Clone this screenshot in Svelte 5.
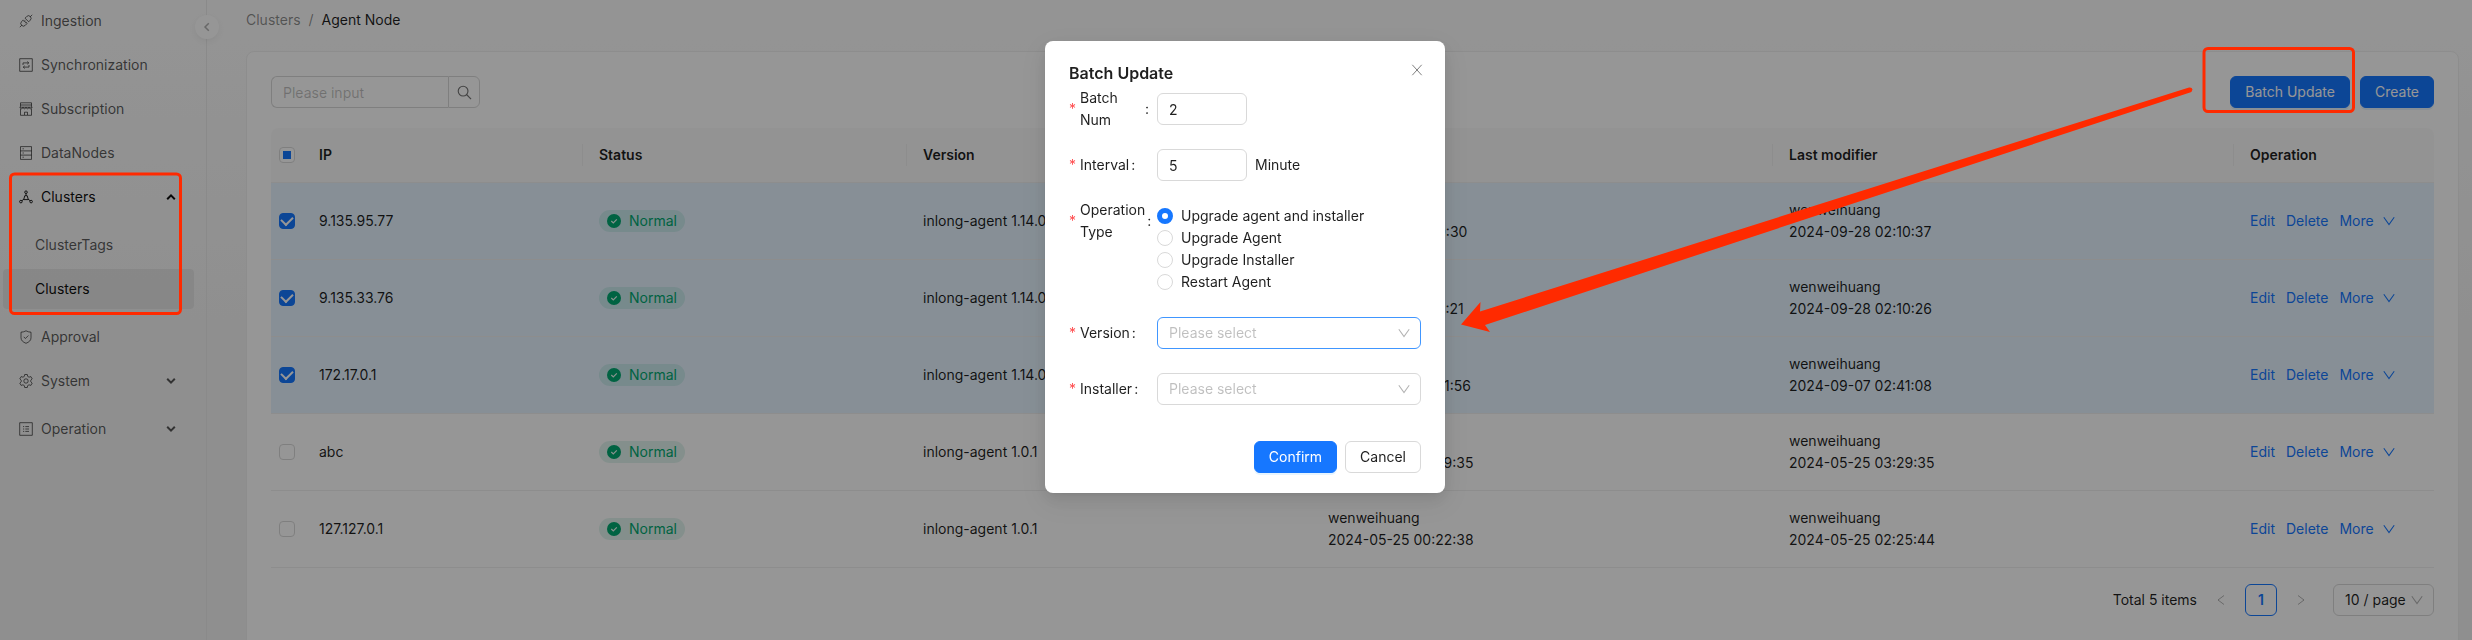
<script>
  const rows = [
    { ip: '9.135.95.77', version: 'inlong-agent 1.14.0', created: '2024-09-27 11:20:30', modified: '2024-09-28 02:10:37', checked: true },
    { ip: '9.135.33.76', version: 'inlong-agent 1.14.0', created: '2024-09-27 11:22:21', modified: '2024-09-28 02:10:26', checked: true },
    { ip: '172.17.0.1', version: 'inlong-agent 1.14.0', created: '2024-05-28 09:01:56', modified: '2024-09-07 02:41:08', checked: true },
    { ip: 'abc', version: 'inlong-agent 1.0.1', created: '2024-05-25 03:29:35', modified: '2024-05-25 03:29:35', checked: false },
    { ip: '127.127.0.1', version: 'inlong-agent 1.0.1', created: '2024-05-25 00:22:38', modified: '2024-05-25 02:25:44', checked: false }
  ];
  const operations = ['Upgrade agent and installer', 'Upgrade Agent', 'Upgrade Installer', 'Restart Agent'];
  let operation = $state(operations[0]);
  const menu = [
    { label: 'Ingestion', icon: 'plug' },
    { label: 'Synchronization', icon: 'sync' },
    { label: 'Subscription', icon: 'shop' },
    { label: 'DataNodes', icon: 'rack' },
    { label: 'Clusters', icon: 'nodes', open: true, children: ['ClusterTags', 'Clusters'] },
    { label: 'Approval', icon: 'shield' },
    { label: 'System', icon: 'gear', group: true },
    { label: 'Operation', icon: 'list', group: true }
  ];
</script>

{#snippet icon(name)}
  <svg class="icon" viewBox="0 0 14 14" aria-hidden="true">
    {#if name === 'plug'}
      <path d="M.8 13.2l2-2M13.2.8l-2 2M6 4.200l1.700-1.700a2.500 2.500 0 0 1 3.600 3.600L9.700 7.800zM4.300 5.900L2.600 7.600a2.500 2.500 0 0 0 3.700 3.700l1.700-1.700zM6 6.600L5 7.700M7.500 8.100l-1 1.100" />
    {:else if name === 'sync'}
      <path d="M.7.7h12.600v12.600H.7zM4 7V4.900h5.400M8.300 3.500l1.500 1.400-1.500 1.300M10 7v2.100H4.600M5.700 7.800L4.200 9.100l1.500 1.400" />
    {:else if name === 'shop'}
      <path d="M1.500.8h11M1.500 3h11M1.500.8v4M12.500.8v4M.7 5.200h12.600M1.500 6.800v6.500h11V6.800M1 5.300c.5 2 2.500 2 3 0 .5 2 2.500 2 3 0 .5 2 2.500 2 3 0 .5 2 2.500 2 3 0M5.500 13v-2.800h3V13" />
    {:else if name === 'rack'}
      <path d="M1.500.6h11v12.800h-11zM1.500 4.900h11M1.500 9.100h11M3.500 2.800h1.400M3.500 7h1.400M3.500 11.200h1.400" />
    {:else if name === 'nodes'}
      <path d="M7 3.600v1.800M4.800 9.200l-2 1.600M9.200 9.200l2 1.600M4.700 9.600L5.800 5.700h2.400l1.100 3.900z" />
      <circle cx="7" cy="2.200" r="1.300" /><circle cx="1.900" cy="11.600" r="1.300" /><circle cx="12.100" cy="11.600" r="1.300" />
    {:else if name === 'shield'}
      <path d="M7 .8c1.500.9 3.200 1.300 5 1.400v5.600c0 2.700-2 4.300-5 5.500-3-1.200-5-2.800-5-5.500V2.200c1.800-.1 3.500-.5 5-1.400zM4.700 6.800l1.700 1.700 3-3" />
    {:else if name === 'gear'}
      <path d="M5.700.5h2.600l.4 1.900 1.300.8 1.900-.6 1.300 2.300-1.400 1.300v1.600l1.400 1.300-1.300 2.300-1.900-.6-1.300.8-.4 1.900H5.700l-.4-1.900-1.300-.8-1.900.6L.8 9.100l1.400-1.300V6.200L.8 4.900l1.300-2.300 1.900.6 1.300-.8z" />
      <circle cx="7" cy="7" r="2.200" />
    {:else if name === 'list'}
      <path d="M.7.7h12.600v12.600H.7zM4 4.600h1.200M4 7h1.200M4 9.400h1.200M6.300 4.600H10M6.300 7H10M6.300 9.400H10" />
    {/if}
  </svg>
{/snippet}

{#snippet chevron()}
  <svg class="chev" viewBox="0 0 12 12" aria-hidden="true"><path d="M.8 2.300L6 9.500l5.200-7.200" /></svg>
{/snippet}

<div class="page">
  <nav class="sider" aria-label="Main">
    <ul class="menu">
      {#each menu as item}
        <li class:group={item.group || item.children}>
          <a class="entry" class:active={item.open} href="#{item.label}">
            {@render icon(item.icon)}
            <span>{item.label}</span>
            {#if item.group || item.children}
              <svg class="arrow" viewBox="0 0 10 10" aria-hidden="true"><path d={item.open ? 'M1.200 7.200L5 3.400l3.800 3.800' : 'M1.200 2.800L5 6.600l3.800-3.800'} /></svg>
            {/if}
          </a>
          {#if item.children}
            <ul class="submenu">
              {#each item.children as child}
                <li><a class="entry child" class:selected={child === 'Clusters'} href="#{child}">{child}</a></li>
              {/each}
            </ul>
          {/if}
        </li>
      {/each}
    </ul>
    <button class="collapse" aria-label="Collapse menu">
      <svg viewBox="0 0 12 12"><path d="M7.800 2.200L4 6l3.800 3.800" /></svg>
    </button>
  </nav>

  <main>
    <nav class="crumbs" aria-label="Breadcrumb">
      <a href="#clusters">Clusters</a><span>/</span><strong>Agent Node</strong>
    </nav>
    <section class="card">
      <div class="toolbar">
        <div class="search">
          <input type="text" placeholder="Please input" aria-label="Search" />
          <button aria-label="Search">
            <svg viewBox="0 0 16 16"><circle cx="6.500" cy="6.500" r="5.200" /><path d="M10.400 10.400l4.600 4.600" /></svg>
          </button>
        </div>
        <div class="actions">
          <button class="btn primary">Batch Update</button>
          <button class="btn primary">Create</button>
        </div>
      </div>

      <table>
        <colgroup>
          <col class="c-check" /><col class="c-ip" /><col class="c-status" /><col class="c-version" />
          <col class="c-user" /><col class="c-user" /><col class="c-op" />
        </colgroup>
        <thead>
          <tr>
            <th class="pick"><input type="checkbox" aria-label="Select all" indeterminate={true} /></th>
            <th class="first">IP</th><th>Status</th><th>Version</th><th>Creator</th><th>Last modifier</th><th>Operation</th>
          </tr>
        </thead>
        <tbody>
          {#each rows as row}
            <tr class:chosen={row.checked}>
              <td class="pick"><input type="checkbox" aria-label="Select {row.ip}" checked={row.checked} /></td>
              <td>{row.ip}</td>
              <td>
                <span class="tag">
                  <svg viewBox="0 0 14 14" aria-hidden="true"><circle cx="7" cy="7" r="7" /><path d="M4.300 7l2 2 3.500-3.700" /></svg>
                  Normal
                </span>
              </td>
              <td>{row.version}</td>
              <td>wenweihuang<br />{row.created}</td>
              <td>wenweihuang<br />{row.modified}</td>
              <td>
                <div class="ops">
                  <a href="#edit">Edit</a><a href="#delete">Delete</a><a class="more" href="#more">More {@render chevron()}</a>
                </div>
              </td>
            </tr>
          {/each}
        </tbody>
      </table>

      <div class="pager">
        <span>Total 5 items</span>
        <button class="turn" aria-label="Previous page"><svg viewBox="0 0 12 12"><path d="M9 1.500L3 6l6 4.500" /></svg></button>
        <button class="current">1</button>
        <button class="turn" aria-label="Next page"><svg viewBox="0 0 12 12"><path d="M3 1.500L9 6l-6 4.500" /></svg></button>
        <div class="select size">
          <select aria-label="Page size"><option>10 / page</option></select>
          {@render chevron()}
        </div>
      </div>
    </section>
  </main>
</div>

<div class="mask">
  <div class="modal" role="dialog" aria-modal="true" aria-labelledby="dialog-title">
    <h2 id="dialog-title">Batch Update</h2>
    <button class="close" aria-label="Close"><svg viewBox="0 0 12 12"><path d="M1.300.8l9.400 10.400M10.700.8L1.300 11.200" /></svg></button>
    <form>
      <div class="field">
        <label for="num"><i>*</i><span>Batch Num</span><b>:</b></label>
        <input id="num" class="short" type="text" value="2" />
      </div>
      <div class="field">
        <label for="interval"><i>*</i><span>Interval</span><b>:</b></label>
        <input id="interval" class="short" type="text" value="5" />
        <span class="unit">Minute</span>
      </div>
      <div class="field">
        <span class="label" id="op-label"><i>*</i><span>Operation Type</span><b>:</b></span>
        <div class="radios" role="radiogroup" aria-labelledby="op-label">
          {#each operations as name}
            <label><input type="radio" name="operation" value={name} bind:group={operation} />{name}</label>
          {/each}
        </div>
      </div>
      <div class="field">
        <label for="version"><i>*</i><span>Version</span><b>:</b></label>
        <div class="select focus"><select id="version"><option>Please select</option></select>{@render chevron()}</div>
      </div>
      <div class="field">
        <label for="installer"><i>*</i><span>Installer</span><b>:</b></label>
        <div class="select"><select id="installer"><option>Please select</option></select>{@render chevron()}</div>
      </div>
      <div class="footer">
        <button type="button" class="btn primary">Confirm</button>
        <button type="button" class="btn">Cancel</button>
      </div>
    </form>
  </div>
</div>

<svg class="marks" width="2472" height="640" viewBox="0 0 2472 640" aria-hidden="true">
  <rect x="10.500" y="174" width="170" height="139.500" rx="4" />
  <rect x="2204" y="48.500" width="149.500" height="63" rx="4" />
  <path d="M1461 324.500L1480.500 302 1480 311.500 2189 87.500Q2192 87 2192.500 89.500 2192 92 2190 92.500L1485 325 1490 332z" />
</svg>

<style>
  :global(body) {
    margin: 0;
    overflow: hidden;
    font-family: Inter, 'Liberation Sans', sans-serif;
    font-size: 14px;
    line-height: 22px;
    color: rgba(0, 0, 0, 0.88);
  }
  * { box-sizing: border-box; }
  button, input, select { font: inherit; color: inherit; margin: 0; }
  button { cursor: pointer; padding: 0; }
  a { text-decoration: none; color: inherit; }
  ul { list-style: none; margin: 0; padding: 0; }
  svg { flex: none; fill: none; stroke: currentColor; }

  .page {
    display: flex;
    height: 100vh;
    overflow: hidden;
    background: linear-gradient(#fcfcfc, #f4f4f4 50%);
  }

  .sider {
    position: relative;
    flex: 0 0 207px;
    border-right: 1px solid #ebebeb;
    padding: 1px 12px 0 3px;
    color: rgba(0, 0, 0, 0.65);
  }
  .menu, .submenu { display: flex; flex-direction: column; gap: 4px; }
  .submenu { padding-top: 8px; }
  .group { padding-bottom: 4px; }
  .entry {
    display: flex;
    align-items: center;
    gap: 8px;
    height: 40px;
    padding: 0 18px 0 16px;
    border-radius: 4px;
  }
  .child { padding-left: 32px; }
  .active, .selected { color: rgba(0, 0, 0, 0.95); }
  .selected { background: rgba(0, 0, 0, 0.06); }
  .icon { width: 14px; height: 14px; stroke-width: 0.900; }
  .arrow { width: 10px; height: 10px; margin-left: auto; stroke-width: 2; }
  .collapse {
    position: absolute;
    top: 15px;
    right: -13px;
    width: 24px;
    height: 24px;
    display: grid;
    place-items: center;
    border: 0;
    border-radius: 50%;
    background: #fff;
    color: rgba(0, 0, 0, 0.3);
    box-shadow: 0 2px 8px -2px rgba(0, 0, 0, 0.1);
  }
  .collapse svg { width: 12px; stroke-width: 1.500; }

  main { flex: 1; min-width: 0; padding: 9px 13px 0 39px; }
  .crumbs { display: flex; gap: 8px; margin-bottom: 20px; color: rgba(0, 0, 0, 0.45); }
  .crumbs strong { font-weight: 400; color: rgba(0, 0, 0, 0.88); }
  .card {
    padding: 24px 24px 40px;
    border: 1px solid #f0f0f0;
    border-radius: 8px;
    background: #fff;
  }
  .toolbar { display: flex; justify-content: space-between; margin-bottom: 20px; }
  .search { display: flex; width: 209px; }
  .search input {
    flex: 1;
    min-width: 0;
    height: 32px;
    padding: 0 11px;
    border: 1px solid #d9d9d9;
    border-right: 0;
    border-radius: 6px 0 0 6px;
    background: #fff;
  }
  ::placeholder { color: rgba(0, 0, 0, 0.25); opacity: 1; }
  .search button {
    width: 32px;
    height: 32px;
    display: grid;
    place-items: center;
    border: 1px solid #d9d9d9;
    border-radius: 0 6px 6px 0;
    background: #fff;
    color: rgba(0, 0, 0, 0.55);
  }
  .search svg { width: 15px; stroke-width: 1.200; }
  .actions { display: flex; gap: 10px; }
  .btn {
    height: 32px;
    padding: 0 14px;
    border: 1px solid #d9d9d9;
    border-radius: 6px;
    background: #fff;
  }
  .primary {
    border-color: #1677ff;
    background: #1677ff;
    color: #fff;
    box-shadow: 0 2px 0 rgba(5, 145, 255, 0.1);
  }

  table { width: 100%; table-layout: fixed; border-collapse: separate; border-spacing: 0; }
  .c-check { width: 32px; }
  .c-ip { width: 280px; }
  .c-status { width: 324px; }
  .c-version { width: 405px; }
  .c-user { width: 461px; }
  .c-op { width: 200px; }
  th, td { padding: 16px; border-bottom: 1px solid #f0f0f0; text-align: left; }
  th { position: relative; background: #fafafa; font-weight: 600; }
  th:first-child { border-radius: 8px 0 0; }
  th:last-child { border-radius: 0 8px 0 0; }
  th:not(.pick, .first)::before {
    content: '';
    position: absolute;
    left: -1px;
    top: 16px;
    width: 1px;
    height: 22px;
    background: #f0f0f0;
  }
  .pick { padding: 0 8px; line-height: 0; }
  .chosen td { background: #e6f4ff; }
  input[type='checkbox'] {
    appearance: none;
    width: 16px;
    height: 16px;
    display: grid;
    place-items: center;
    border: 1px solid #d9d9d9;
    border-radius: 4px;
    background: #fff;
  }
  input[type='checkbox']:indeterminate::before { content: ''; width: 8px; height: 8px; background: #1677ff; }
  input[type='checkbox']:checked { border-color: #1677ff; background: #1677ff; }
  input[type='checkbox']:checked::before {
    content: '';
    width: 6px;
    height: 9px;
    margin-bottom: 3px;
    border: solid #fff;
    border-width: 0 2px 2px 0;
    transform: rotate(45deg);
  }
  .tag {
    display: inline-flex;
    align-items: center;
    gap: 8px;
    padding: 0 8px;
    border-radius: 11px;
    background: rgba(0, 168, 112, 0.12);
    color: #00a870;
    vertical-align: top;
  }
  .tag svg { width: 14px; fill: #00a870; stroke: none; }
  .tag path { fill: none; stroke: #e8f8f2; stroke-width: 1.200; }
  .ops { display: flex; gap: 11px; color: #1677ff; }
  .more { display: flex; align-items: center; gap: 9px; }
  .chev { width: 12px; height: 12px; stroke-width: 1.100; }

  .pager { display: flex; justify-content: flex-end; align-items: center; gap: 8px; margin-top: 16px; }
  .pager button { width: 32px; height: 32px; border: 0; border-radius: 6px; background: none; }
  .turn { display: grid; place-items: center; color: rgba(0, 0, 0, 0.3); }
  .turn svg { width: 12px; }
  .pager .current { border: 1px solid #1677ff; background: #fff; color: #1677ff; font-weight: 600; }
  .select { position: relative; flex: 1; color: rgba(0, 0, 0, 0.25); }
  .select select {
    appearance: none;
    display: block;
    width: 100%;
    height: 32px;
    padding: 0 11px;
    border: 1px solid #d9d9d9;
    border-radius: 6px;
    background: #fff;
    outline: none;
  }
  .select .chev { position: absolute; right: 11px; top: 10px; color: rgba(0, 0, 0, 0.3); }
  .focus select { border-color: #4096ff; }
  .size { flex: 0 0 101px; margin-left: 8px; color: rgba(0, 0, 0, 0.88); }

  .mask {
    position: fixed;
    inset: 0;
    display: flex;
    justify-content: center;
    align-items: flex-start;
    padding: 41px 0 0 18px;
    background: rgba(0, 0, 0, 0.41);
  }
  .modal {
    position: relative;
    width: 400px;
    padding: 20px 24px;
    border-radius: 8px;
    background: #fff;
    box-shadow: 0 6px 16px rgba(0, 0, 0, 0.08), 0 3px 6px -4px rgba(0, 0, 0, 0.12), 0 9px 28px 8px rgba(0, 0, 0, 0.05);
  }
  h2 { margin: 0 0 8px; font-size: 16px; line-height: 24px; font-weight: 600; }
  .close {
    position: absolute;
    top: 18px;
    right: 17px;
    width: 22px;
    height: 22px;
    display: grid;
    place-items: center;
    border: 0;
    background: none;
    color: rgba(0, 0, 0, 0.5);
  }
  .close svg { width: 12px; }
  form { display: flex; flex-direction: column; gap: 24px; }
  .field { display: flex; align-items: flex-start; }
  .field > label, .label {
    display: flex;
    align-items: center;
    flex: 0 0 88px;
    min-width: 0;
    width: 88px;
    height: 32px;
  }
  .field i { width: 7px; margin-right: 4px; font-style: normal; color: #ff4d4f; }
  .field b { margin: 0 8px 0 2px; font-weight: 400; }
  .short {
    width: 90px;
    height: 32px;
    padding: 0 11px;
    border: 1px solid #d9d9d9;
    border-radius: 6px;
  }
  .unit { margin-left: 8px; line-height: 32px; }
  .radios label { display: flex; align-items: center; gap: 8px; }
  input[type='radio'] {
    appearance: none;
    width: 16px;
    height: 16px;
    border: 1px solid #d9d9d9;
    border-radius: 50%;
    background: #fff;
  }
  input[type='radio']:checked { border: 5px solid #1677ff; }
  .footer { display: flex; justify-content: flex-end; gap: 8px; padding-top: 12px; }

  .marks { position: fixed; left: 0; top: 0; pointer-events: none; color: #ff2a00; }
  .marks rect { stroke-width: 3; }
  .marks path { fill: currentColor; stroke: none; }
</style>
